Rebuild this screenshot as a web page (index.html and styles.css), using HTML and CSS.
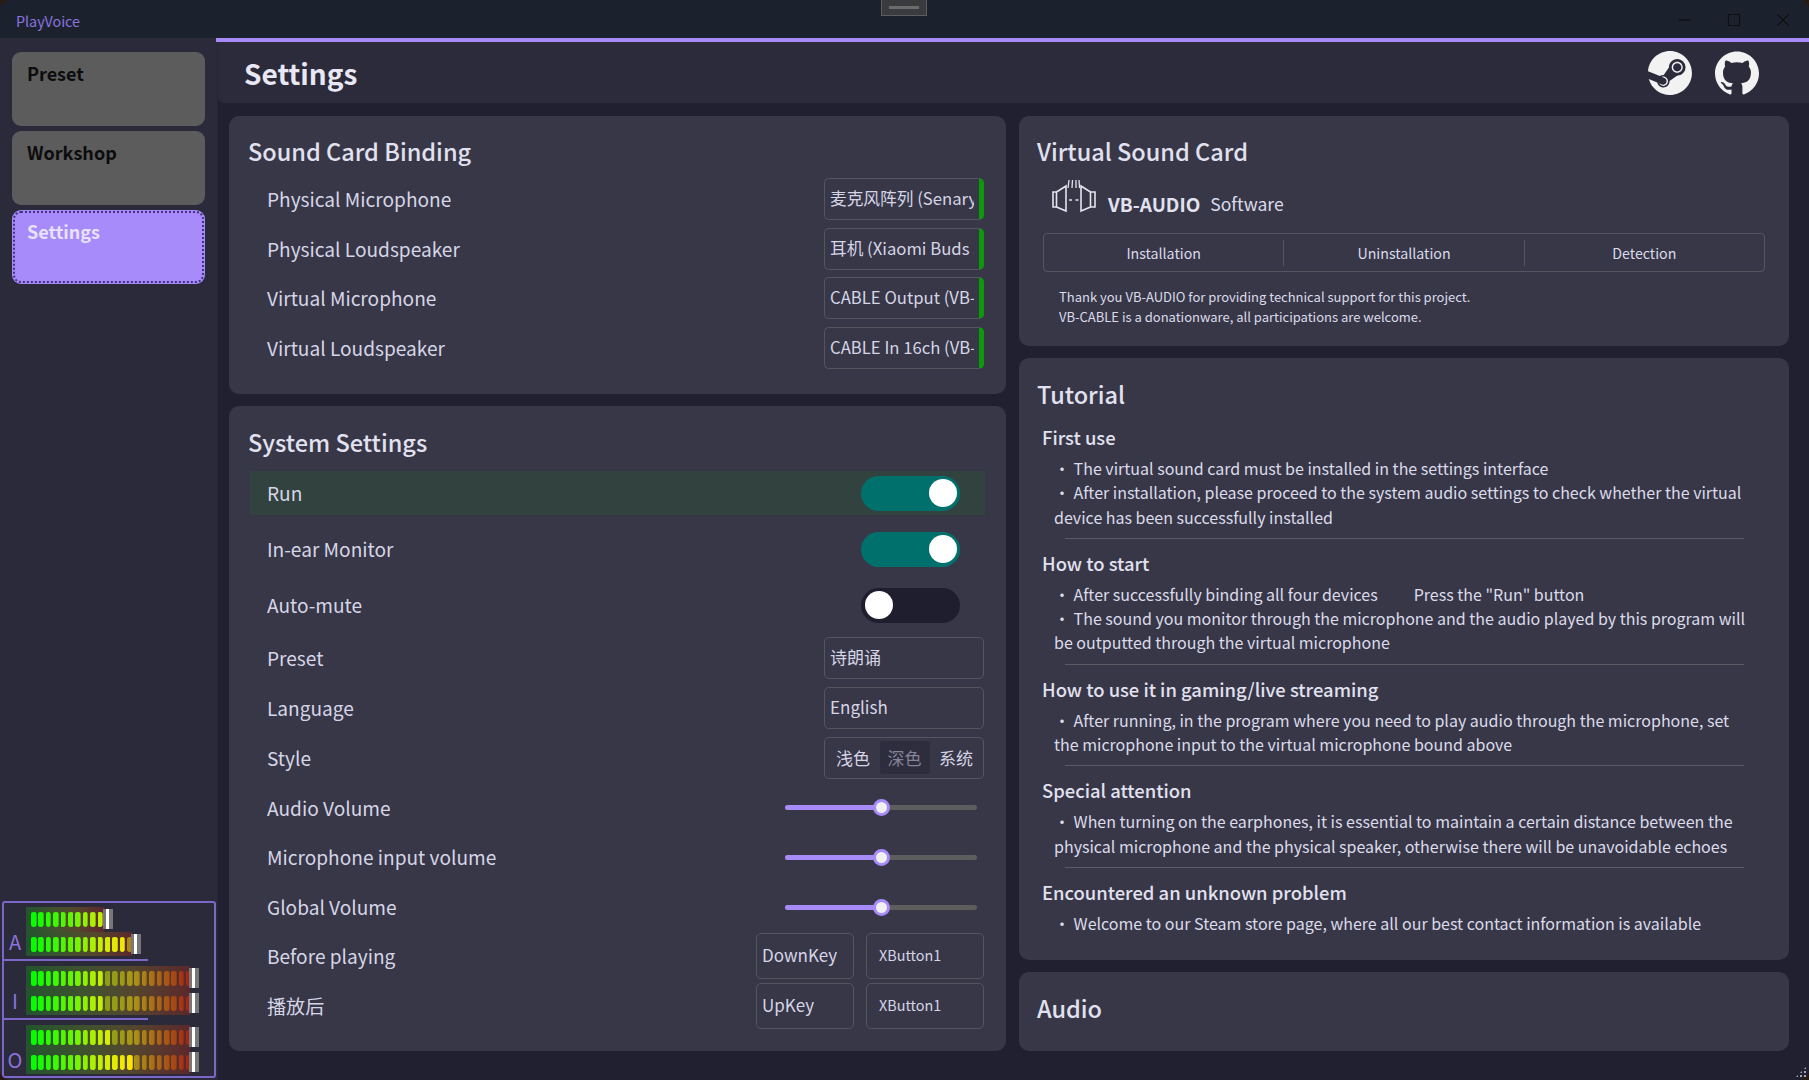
FILE: index.html
```html
<!DOCTYPE html>
<html lang="en">
<head>
  <meta charset="UTF-8" />
  <title>PlayVoice</title>
  <link rel="stylesheet" href="styles.css">
</head>
<body>
  <div class="window">
    <div class="titlebar">
      <span class="app-name">PlayVoice</span>
      <div class="drag-handle"><i></i></div>
      <div class="win-controls">
        <svg width="14" height="14" viewBox="0 0 14 14"><path d="M1 7h12" stroke="#0d0f13" stroke-width="1.4"/></svg>
        <svg width="14" height="14" viewBox="0 0 14 14"><path d="M1.5 1.5h11v11h-11z" fill="none" stroke="#0d0f13" stroke-width="1.2"/></svg>
        <svg width="14" height="14" viewBox="0 0 14 14"><path d="M1.5 1.5l11 11M12.5 1.5l-11 11" stroke="#0d0f13" stroke-width="1.2"/></svg>
      </div>
    </div>

    <div class="body">
      <aside class="sidebar">
        <nav class="nav">
          <div class="nav-item">Preset</div>
          <div class="nav-item">Workshop</div>
          <div class="nav-item active">Settings</div>
        </nav>

        <div class="meters">
          <div class="meter-group">
            <span class="meter-letter">A</span>
            <div class="meter-bars">
              <div class="meter" style="width:78px"><div class="seg lit" style="width:74px"></div><b class="peak"></b></div>
              <div class="meter" style="width:106px"><div class="seg dim" style="width:103px"></div><div class="seg lit" style="width:96px"></div><b class="peak"></b></div>
            </div>
          </div>
          <div class="meter-sep"></div>
          <div class="meter-group">
            <span class="meter-letter">I</span>
            <div class="meter-bars">
              <div class="meter"><div class="seg dim"></div><div class="seg lit" style="width:74px"></div><b class="peak"></b></div>
              <div class="meter"><div class="seg dim"></div><div class="seg lit" style="width:74px"></div><b class="peak"></b></div>
            </div>
          </div>
          <div class="meter-sep"></div>
          <div class="meter-group">
            <span class="meter-letter">O</span>
            <div class="meter-bars">
              <div class="meter"><div class="seg dim"></div><div class="seg lit" style="width:81px"></div><b class="peak"></b></div>
              <div class="meter"><div class="seg dim"></div><div class="seg lit" style="width:103px"></div><b class="peak"></b></div>
            </div>
          </div>
        </div>
      </aside>

      <main class="main">
        <header class="page-head">
          <h1>Settings</h1>
          <div class="head-icons">
            <svg width="44" height="44" viewBox="0 0 24 24" fill="#f2f2f2"><path d="M11.979 0C5.678 0 .511 4.86.022 11.037l6.432 2.658c.545-.371 1.203-.59 1.912-.59.063 0 .125.004.188.006l2.861-4.142V8.91c0-2.495 2.028-4.524 4.524-4.524 2.494 0 4.524 2.031 4.524 4.527s-2.03 4.525-4.524 4.525h-.105l-4.076 2.911c0 .052.004.105.004.159 0 1.875-1.515 3.396-3.39 3.396-1.635 0-3.016-1.173-3.331-2.727L.436 15.27C1.862 20.307 6.486 24 11.979 24c6.627 0 11.999-5.373 11.999-12S18.605 0 11.979 0zM7.54 18.21l-1.473-.61c.262.543.714.999 1.314 1.25 1.297.539 2.793-.076 3.332-1.375.263-.63.264-1.319.005-1.949s-.75-1.121-1.377-1.383c-.624-.26-1.29-.249-1.878-.03l1.523.63c.956.4 1.409 1.5 1.009 2.455-.397.957-1.497 1.41-2.454 1.012H7.54zm11.415-9.303c0-1.662-1.353-3.015-3.015-3.015-1.665 0-3.015 1.353-3.015 3.015 0 1.665 1.35 3.015 3.015 3.015 1.663 0 3.015-1.35 3.015-3.015zm-5.273-.005c0-1.252 1.013-2.266 2.265-2.266 1.249 0 2.266 1.014 2.266 2.266 0 1.251-1.017 2.265-2.266 2.265-1.253 0-2.265-1.014-2.265-2.265z"/></svg>
            <svg width="44" height="44" viewBox="0 0 24 24" fill="#f2f2f2"><path d="M12 .297c-6.63 0-12 5.373-12 12 0 5.303 3.438 9.8 8.205 11.385.6.113.82-.258.82-.577 0-.285-.01-1.04-.015-2.04-3.338.724-4.042-1.61-4.042-1.61C4.422 18.07 3.633 17.7 3.633 17.7c-1.087-.744.084-.729.084-.729 1.205.084 1.838 1.236 1.838 1.236 1.07 1.835 2.809 1.305 3.495.998.108-.776.417-1.305.76-1.605-2.665-.3-5.466-1.332-5.466-5.93 0-1.31.465-2.38 1.235-3.22-.135-.303-.54-1.523.105-3.176 0 0 1.005-.322 3.3 1.23.96-.267 1.98-.399 3-.405 1.02.006 2.04.138 3 .405 2.28-1.552 3.285-1.23 3.285-1.23.645 1.653.24 2.873.12 3.176.765.84 1.23 1.91 1.23 3.22 0 4.61-2.805 5.625-5.475 5.92.42.36.81 1.096.81 2.22 0 1.606-.015 2.896-.015 3.286 0 .315.21.69.825.57C20.565 22.092 24 17.592 24 12.297c0-6.627-5.373-12-12-12"/></svg>
          </div>
        </header>

        <div class="columns">
          <div class="column">
            <section class="card card-binding">
              <h2>Sound Card Binding</h2>
              <div class="row"><span>Physical Microphone</span><div class="select device"><span>麦克风阵列 (Senary Audio)</span></div></div>
              <div class="row"><span>Physical Loudspeaker</span><div class="select device"><span>耳机 (Xiaomi Buds 3)</span></div></div>
              <div class="row"><span>Virtual Microphone</span><div class="select device"><span>CABLE Output (VB-Audio)</span></div></div>
              <div class="row"><span>Virtual Loudspeaker</span><div class="select device"><span>CABLE In 16ch (VB-Audio)</span></div></div>
            </section>

            <section class="card card-system">
              <h2>System Settings</h2>
              <div class="row row-toggle row-run"><span>Run</span><div class="toggle on"></div></div>
              <div class="row row-toggle"><span>In-ear Monitor</span><div class="toggle on"></div></div>
              <div class="row row-toggle"><span>Auto-mute</span><div class="toggle"></div></div>
              <div class="row"><span>Preset</span><div class="select"><span>诗朗诵</span></div></div>
              <div class="row"><span>Language</span><div class="select"><span>English</span></div></div>
              <div class="row"><span>Style</span>
                <div class="select segmented"><span>浅色</span><span class="current">深色</span><span>系统</span></div>
              </div>
              <div class="row"><span>Audio Volume</span><div class="slider"><div class="slider-fill" style="width:50%"></div></div></div>
              <div class="row"><span>Microphone input volume</span><div class="slider"><div class="slider-fill" style="width:50%"></div></div></div>
              <div class="row"><span>Global Volume</span><div class="slider"><div class="slider-fill" style="width:50%"></div></div></div>
              <div class="row row-key"><span>Before playing</span>
                <div class="keys"><div class="select key-name"><span>DownKey</span></div><div class="select key-btn"><span>XButton1</span></div></div>
              </div>
              <div class="row row-key"><span>播放后</span>
                <div class="keys"><div class="select key-name"><span>UpKey</span></div><div class="select key-btn"><span>XButton1</span></div></div>
              </div>
            </section>
          </div>

          <div class="column">
            <section class="card card-virtual">
              <h2>Virtual Sound Card</h2>
              <div class="vb-logo">
                <svg width="44" height="33" viewBox="0 0 44 33" fill="none" stroke="#e4e4ee" stroke-width="1.6">
                  <path d="M1 12h3.500v15H1zM4.500 12L14 6v25l-9.500-4"/>
                  <path d="M43 12h-4.500v15H43zM38.500 12L29 6v25l9.500-4"/>
                  <path d="M17 20h3M23.500 20h3"/>
                  <path d="M16 8l1-8M20 8l.5-8M24 8V0M27.500 8L27 0" stroke-width="1.300"/>
                </svg>
                <b>VB-AUDIO</b><span>Software</span>
              </div>
              <div class="tabs"><span>Installation</span><span>Uninstallation</span><span>Detection</span></div>
              <p class="thanks">Thank you VB-AUDIO for providing technical support for this project.<br>VB-CABLE is a donationware, all participations are welcome.</p>
            </section>

            <section class="card card-tutorial">
              <h2>Tutorial</h2>
              <div class="tut">
                <h3>First use</h3>
                <p>・ The virtual sound card must be installed in the settings interface</p>
                <p>・ After installation, please proceed to the system audio settings to check whether the virtual device has been successfully installed</p>
              </div>
              <div class="tut">
                <h3>How to start</h3>
                <p>・ After successfully binding all four devices<span class="tut-gap"></span>Press the "Run" button</p>
                <p>・ The sound you monitor through the microphone and the audio played by this program will be outputted through the virtual microphone</p>
              </div>
              <div class="tut">
                <h3>How to use it in gaming/live streaming</h3>
                <p>・ After running, in the program where you need to play audio through the microphone, set the microphone input to the virtual microphone bound above</p>
              </div>
              <div class="tut">
                <h3>Special attention</h3>
                <p>・ When turning on the earphones, it is essential to maintain a certain distance between the physical microphone and the physical speaker, otherwise there will be unavoidable echoes</p>
              </div>
              <div class="tut">
                <h3>Encountered an unknown problem</h3>
                <p>・ Welcome to our Steam store page, where all our best contact information is available</p>
              </div>
            </section>

            <section class="card card-audio">
              <h2>Audio</h2>
            </section>
          </div>
        </div>
      </main>
    </div>
    <div class="resize-grip"></div>
  </div>
</body>
</html>
```

FILE: styles.css
```css
*, *::after {
  box-sizing: border-box;
}
html, body {
  height: 100%;
}
body {
  margin: 0;
  background-color: #2a1a14;
  color: #dcdbea;
  font-family: 'Noto Sans CJK SC', 'Noto Sans', sans-serif;
  overflow: hidden;
}
h1, h2, h3, p {
  margin: 0;
}
.window {
  position: relative;
  display: flex;
  flex-direction: column;
  height: 1080px;
  border-radius: 10px;
  overflow: hidden;
  background-color: #212030;
}

/* title bar */
.titlebar {
  display: flex;
  align-items: center;
  justify-content: space-between;
  height: 38px;
  padding: 2px 19px 0 16px;
  background-color: #1c222d;
}
.app-name {
  color: #8b74e0;
  font-size: 14.300px;
}
.drag-handle {
  position: absolute;
  top: -1px;
  left: 881px;
  width: 46px;
  height: 17px;
  background-color: #3a3b3f;
  border: 1px solid #5d5d60;
  display: flex;
  align-items: center;
  justify-content: center;
}
.drag-handle i {
  width: 30px;
  height: 3px;
  background-color: #6b6b6b;
}
.win-controls {
  display: flex;
  gap: 35px;
}

.body {
  flex: 1;
  display: flex;
  min-height: 0;
}

/* sidebar */
.sidebar {
  width: 218px;
  display: flex;
  flex-direction: column;
  justify-content: space-between;
  padding: 14px 0 2px 2px;
  background-color: #2b2a3a;
  border-right: 1px solid #262535;
}
.nav {
  display: flex;
  flex-direction: column;
  gap: 5px;
  padding-left: 10px;
}
.nav-item {
  width: 193px;
  height: 74px;
  padding: 8px 15px;
  background-color: #5c5c5c;
  border-radius: 9px;
  color: #0c0c0c;
  font-size: 18px;
  font-weight: 700;
}
.nav-item.active {
  background-color: #a78bfa;
  color: #e8e2ff;
  outline: 2px dotted #43327e;
  outline-offset: -3px;
}

/* level meters */
.meters {
  width: 214px;
  height: 177px;
  padding-top: 4px;
  border: 2px solid #7c66c8;
  border-radius: 3px;
}
.meter-group {
  display: flex;
  height: 49px;
}
.meter-letter {
  width: 22px;
  align-self: flex-end;
  color: #8a72de;
  font-size: 20px;
  line-height: 29px;
  text-align: center;
}
.meter-bars {
  display: flex;
  flex-direction: column;
}
.meter {
  position: relative;
  width: 164px;
  height: 24.500px;
  background: linear-gradient(90deg, rgba(0,255,0,.2), rgba(150,220,0,.22) 40%, rgba(230,170,0,.22) 65%, rgba(240,30,0,.25));
}
.seg {
  position: absolute;
  top: 5px;
  left: 4.700px;
  width: 160px;
  height: 15px;
  background: linear-gradient(90deg, #00ff00 0, #66f500 42px, #ccee00 72px, #ffe600 100px, #ffb000 118px, #f05a00 145px, #e81a00 160px) no-repeat;
  background-size: 160px 100%;
  -webkit-mask: url("data:image/svg+xml,%3Csvg xmlns='http://www.w3.org/2000/svg' width='7.4' height='15'%3E%3Crect width='5.2' height='15' rx='2.4'/%3E%3C/svg%3E") repeat-x;
  mask: url("data:image/svg+xml,%3Csvg xmlns='http://www.w3.org/2000/svg' width='7.4' height='15'%3E%3Crect width='5.2' height='15' rx='2.4'/%3E%3C/svg%3E") repeat-x;
}
.seg.dim {
  opacity: .5;
}
.peak {
  position: absolute;
  top: 2px;
  right: -9px;
  width: 10px;
  height: 20px;
  background: linear-gradient(90deg, #777 0 30%, #fff 30% 60%, #777 60%);
}
.meter-sep {
  width: 144px;
  height: 2px;
  margin: 3px 0 5px;
  background-color: #7c66c8;
}

/* main area */
.main {
  flex: 1;
  min-width: 0;
  border-top: 4px solid #a78bfa;
  margin-left: -2px;
}
.page-head {
  display: flex;
  align-items: center;
  justify-content: space-between;
  height: 61px;
  margin-left: 2px;
  padding: 0 50px 0 26px;
  background-color: #2c2b3b;
  border-bottom-left-radius: 6px;
}
.page-head h1 {
  color: #e8e7f4;
  font-size: 28px;
  font-weight: 700;
}
.head-icons {
  display: flex;
  gap: 23px;
}
.columns {
  display: flex;
  gap: 13px;
  padding: 13px 20px 0 13px;
}
.column {
  display: flex;
  flex-direction: column;
  gap: 12px;
}
.column:first-child {
  width: 777px;
}
.column:last-child {
  width: 770px;
}

/* cards */
.card {
  padding: 15px 18px 0;
  background-color: #373748;
  border-radius: 10px;
}
.card h2 {
  height: 40px;
  color: #e2e1ef;
  font-size: 23.500px;
  font-weight: 500;
  line-height: 40px;
}
.card-binding {
  height: 278px;
}
.card-binding h2 {
  margin: 0 0 7px 1px;
}
.card-system {
  height: 645px;
  padding-top: 16px;
}
.card-system h2 {
  margin: 0 0 9px 1px;
}
.card-virtual {
  height: 230px;
}
.card-tutorial {
  height: 602px;
  padding-top: 16px;
}
.card-audio {
  height: 79px;
  padding-top: 16px;
}

.row {
  display: flex;
  align-items: center;
  justify-content: space-between;
  height: 42px;
  margin: 0 3px 7.670px;
  padding: 0 1px 0 17px;
  font-size: 19.100px;
  color: #d6d5e6;
}
.card-system .row {
  margin-bottom: 7.850px;
}
.card-system .row-toggle {
  height: 44px;
  margin-bottom: 12px;
  padding-right: 25px;
}
.row-toggle + .row:not(.row-toggle) {
  margin-top: -2px;
}
.row-run {
  background-color: #32423f;
}
.card-system .row-key {
  height: 46px;
  margin-bottom: 4px;
}
.row:not(.row-key) + .row-key {
  margin-top: -3px;
}

.select {
  width: 160px;
  height: 42px;
  padding-left: 5px;
  border: 1.5px solid #55555f;
  border-radius: 5px;
  font-size: 17px;
  line-height: 38px;
  white-space: nowrap;
  overflow: hidden;
}
.select.device {
  border-right: 5px solid #0a9a0a;
  font-size: 16.700px;
}
.select.device span {
  display: block;
  width: 144px;
  overflow: hidden;
}
.segmented {
  display: flex;
  align-items: center;
  justify-content: space-between;
  padding: 0 10px 0 11px;
}
.segmented .current {
  padding: 0 8px;
  line-height: 33px;
  background-color: #2e2d3e;
  border-radius: 3px;
  color: #85849a;
}
.keys {
  display: flex;
  gap: 12px;
}
.key-name {
  width: 98px;
  height: 46px;
  line-height: 42px;
}
.key-btn {
  width: 118px;
  height: 46px;
  padding-left: 12px;
  font-size: 14.400px;
  line-height: 42px;
}

.toggle {
  position: relative;
  width: 99px;
  height: 35px;
  background-color: #1f1e2e;
  border-radius: 18px;
}
.toggle::after {
  content: "";
  position: absolute;
  top: 3.500px;
  left: 3.500px;
  width: 28px;
  height: 28px;
  background-color: #fff;
  border-radius: 50%;
}
.toggle.on {
  background-color: #00706d;
}
.toggle.on::after {
  left: auto;
  right: 3.500px;
}

.slider {
  position: relative;
  width: 192px;
  height: 5px;
  margin-right: 7px;
  background-color: #5d5d5d;
  border-radius: 3px;
}
.slider-fill {
  position: relative;
  height: 100%;
  background-color: #a78bfa;
  border-radius: 3px;
}
.slider-fill::after {
  content: "";
  position: absolute;
  top: -6px;
  right: -8.500px;
  width: 17px;
  height: 17px;
  background-color: #f0f0f0;
  border: 3px solid #a78bfa;
  border-radius: 50%;
}

/* virtual sound card */
.vb-logo {
  display: flex;
  align-items: flex-end;
  height: 36px;
  margin: 9px 0 0 15px;
  line-height: 24px;
}
.vb-logo svg {
  margin: 0 12px 3px 0;
}
.vb-logo b {
  margin-right: 10px;
  color: #e2e1ef;
  font-size: 19px;
}
.vb-logo span {
  font-size: 17.500px;
}
.tabs {
  display: flex;
  height: 39px;
  margin: 17px 6px 0 6px;
  border: 1.5px solid #55555f;
  border-radius: 4px;
  align-items: center;
  font-size: 14.200px;
}
.tabs span {
  flex: 1;
  height: 26px;
  line-height: 26px;
  text-align: center;
}
.tabs span + span {
  border-left: 1.5px solid #55555f;
}
.thanks {
  margin: 15px 0 0 22px;
  font-size: 13px;
  line-height: 20px;
}

/* tutorial */
.card-tutorial h2 {
  margin-bottom: 9px;
}
.tut {
  margin-left: 5px;
  margin-bottom: 10px;
}
.tut::after {
  content: "";
  display: block;
  height: 1px;
  margin: 9px 27px 0 23px;
  background-color: #5b5b66;
}
.tut:last-child::after {
  display: none;
}
.tut h3 {
  height: 28px;
  margin-bottom: 5px;
  color: #e2e1ef;
  font-size: 18.400px;
  font-weight: 500;
  line-height: 28px;
}
.tut p {
  padding: 0 19px 0 12px;
  font-size: 16px;
  line-height: 24.300px;
}
.tut-gap {
  display: inline-block;
  width: 36px;
}
.resize-grip {
  position: absolute;
  right: 2px;
  bottom: 2px;
  width: 12px;
  height: 12px;
  background: radial-gradient(circle, #a9a9b5 1px, transparent 1.300px) 0 0 / 4px 4px;
  clip-path: polygon(100% 0, 100% 100%, 0 100%);
}
```
